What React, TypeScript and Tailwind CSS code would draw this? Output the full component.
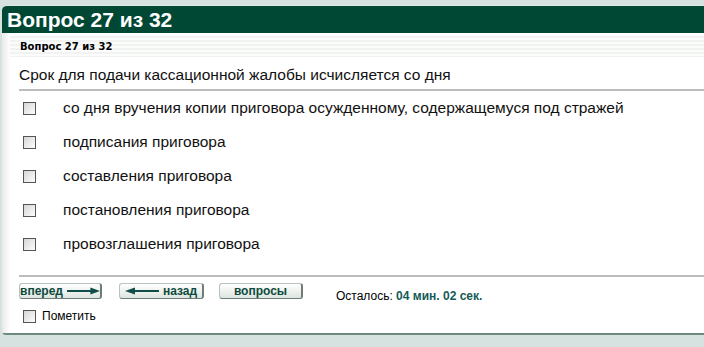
const options = [
  "со дня вручения копии приговора осужденному, содержащемуся под стражей",
  "подписания приговора",
  "составления приговора",
  "постановления приговора",
  "провозглашения приговора",
];

function Box() {
  return (
    <span className="block w-[13px] h-[13px] border border-[#555] bg-gradient-to-br from-[#d6d6d6] to-[#fdfdfd]" />
  );
}

function Arrow({ left }: { left?: boolean }) {
  return (
    <svg width="34" height="8" viewBox="0 0 34 8" className={left ? "rotate-180" : ""}>
      <line x1="0" y1="4" x2="26" y2="4" stroke="#0f4d48" strokeWidth="2" />
      <polygon points="24,0.5 34,4 24,7.5" fill="#0f4d48" />
    </svg>
  );
}

function NavButton({ children, w }: { children: React.ReactNode; w: string }) {
  return (
    <button
      className={`${w} h-[16px] flex items-center justify-center gap-1 rounded-[3px] border border-[#b9c4bf] border-r-[#6f7c76] border-b-[#6f7c76] border-r-2 bg-gradient-to-b from-white to-[#dde5e0] text-[12px] leading-none font-bold text-[#0d4a3c]`}
    >
      {children}
    </button>
  );
}

export default function App() {
  return (
    <div className="w-[704px] h-[347px] overflow-hidden bg-[#d5e2df] pt-[5px] font-['Liberation_Sans',Arial,sans-serif]">
      {/* Header */}
      <div className="ml-[2px] h-[28px] rounded-tl-[5px] border-t border-[#dfe9e6] bg-[#004833] pl-[5px] text-[21px] leading-[27px] font-bold text-white">
        Вопрос 27 из 32
      </div>

      {/* Panel */}
      <div className="ml-[2px] h-[300px] rounded-bl-[4px] bg-white shadow-[0_2px_0_#6e8a80] flex">
        <div className="w-[8px] shrink-0 bg-gradient-to-r from-[#e9e9e9] to-white" />
        <div className="flex-1 flex flex-col">
          <div className="mt-[3px] h-[21px] shrink-0 flex items-center pl-[10px] bg-[repeating-linear-gradient(to_bottom,#f0f3f0_0px,#f0f3f0_2px,#fbfcfb_2px,#fbfcfb_4px)] font-['DejaVu_Sans',Verdana,sans-serif] text-[10px] font-bold text-black">
            Вопрос 27 из 32
          </div>

          <div className="ml-[9px] h-[34px] shrink-0 flex items-center pt-[3px] border-b-2 border-[#bdbdbd] text-[15.5px] text-[#111]">
            Срок для подачи кассационной жалобы исчисляется со дня
          </div>

          <div className="flex flex-col">
            {options.map((o) => (
              <label key={o} className="h-[34px] shrink-0 flex items-center">
                <span className="ml-[13px] w-[40px]">
                  <Box />
                </span>
                <span className="text-[15.5px] text-[#111]">{o}</span>
              </label>
            ))}
          </div>

          <div className="ml-[9px] mt-[14px] border-t-2 border-[#bdbdbd]" />

          <div className="ml-[9px] mt-[6px] flex items-start">
            <NavButton w="w-[83px]">
              вперед <Arrow />
            </NavButton>
            <span className="w-[17px]" />
            <NavButton w="w-[85px]">
              <Arrow left /> назад
            </NavButton>
            <span className="w-[15px]" />
            <NavButton w="w-[84px]">вопросы</NavButton>
            <span className="ml-[33px] mt-[6px] text-[12px] leading-[14px] text-black">
              Осталось: <span className="font-bold text-[#155a57]">04 мин. 02 сек.</span>
            </span>
          </div>

          <label className="ml-[13px] mt-[6px] flex items-center gap-[6px] text-[12px] leading-[14px] text-black">
            <Box />
            Пометить
          </label>
        </div>
      </div>
    </div>
  );
}
